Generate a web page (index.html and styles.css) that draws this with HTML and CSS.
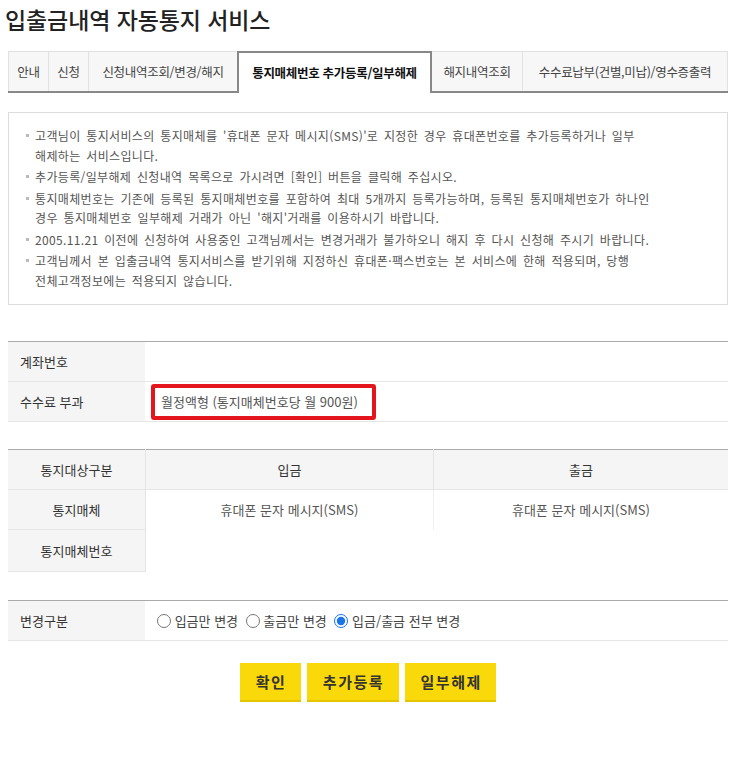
FILE: index.html
```html
<!DOCTYPE html>
<html lang="ko">
<head>
    <meta charset="UTF-8">
    <meta name="viewport" content="width=device-width, initial-scale=1.0">
    <title>입출금내역 자동통지 서비스</title>
    <link rel="stylesheet" href="styles.css">
</head>
<body>
    <div class="page">
        <h1 class="title">입출금내역 자동통지 서비스</h1>

        <ul class="tabs">
            <li class="w40">안내</li>
            <li class="w40">신청</li>
            <li class="w149">신청내역조회/변경/해지</li>
            <li class="w195 on">통지매체번호 추가등록/일부해제</li>
            <li class="w90">해지내역조회</li>
            <li class="last">수수료납부(건별,미납)/영수증출력</li>
        </ul>

        <div class="info">
            <ul>
                <li>고객님이 통지서비스의 통지매체를 '휴대폰 문자 메시지(SMS)'로 지정한 경우 휴대폰번호를 추가등록하거나 일부<br>해제하는 서비스입니다.</li>
                <li>추가등록/일부해제 신청내역 목록으로 가시려면 [확인] 버튼을 클릭해 주십시오.</li>
                <li>통지매체번호는 기존에 등록된 통지매체번호를 포함하여 최대 5개까지 등록가능하며, 등록된 통지매체번호가 하나인<br>경우 통지매체번호 일부해제 거래가 아닌 '해지'거래를 이용하시기 바랍니다.</li>
                <li>2005.11.21 이전에 신청하여 사용중인 고객님께서는 변경거래가 불가하오니 해지 후 다시 신청해 주시기 바랍니다.</li>
                <li>고객님께서 본 입출금내역 통지서비스를 받기위해 지정하신 휴대폰·팩스번호는 본 서비스에 한해 적용되며, 당행<br>전체고객정보에는 적용되지 않습니다.</li>
            </ul>
        </div>

        <table class="form">
            <tr>
                <th>계좌번호</th>
                <td></td>
            </tr>
            <tr>
                <th>수수료 부과</th>
                <td><span class="mark">월정액형 (통지매체번호당 월 900원)</span></td>
            </tr>
        </table>

        <table class="target">
            <tr class="head">
                <th>통지대상구분</th>
                <th class="col-in">입금</th>
                <th>출금</th>
            </tr>
            <tr>
                <th class="side">통지매체</th>
                <td class="col-in">휴대폰 문자 메시지(SMS)</td>
                <td>휴대폰 문자 메시지(SMS)</td>
            </tr>
            <tr class="tall">
                <th class="side">통지매체번호</th>
                <td class="empty"></td>
                <td class="empty"></td>
            </tr>
        </table>

        <table class="form change">
            <tr>
                <th>변경구분</th>
                <td>
                    <label><input type="radio" name="kind"> 입금만 변경</label>
                    <label><input type="radio" name="kind"> 출금만 변경</label>
                    <label><input type="radio" name="kind" checked> 입금/출금 전부 변경</label>
                </td>
            </tr>
        </table>

        <div class="btns">
            <button type="button">확인</button>
            <button type="button">추가등록</button>
            <button type="button">일부해제</button>
        </div>
    </div>
</body>
</html>
```

FILE: styles.css
```css
body {
    margin: 0;
    font-family: "Noto Sans CJK KR", "Noto Sans", sans-serif;
    color: #333;
    background: #fff;
}

.page {
    width: 720px;
    padding: 0 8px;
}

.title {
    margin: 0;
    padding: 3px 0 0 0;
    margin-left: -3px;
    height: 48px;
    font-size: 23px;
    font-weight: 500;
    line-height: 32px;
    color: #222;
    letter-spacing: -0.1px;
}

.tabs {
    display: flex;
    margin: 0;
    padding: 0;
    list-style: none;
    border-bottom: 2px solid #888;
}

.tabs li {
    box-sizing: border-box;
    height: 40px;
    line-height: 40px;
    font-size: 12.5px;
    letter-spacing: -0.3px;
    text-align: center;
    color: #444;
    background: #f7f7f7;
    border-top: 1px solid #e2e2e2;
    border-left: 1px solid #e2e2e2;
    white-space: nowrap;
}

.tabs .w40 { width: 40px; }
.tabs .w149 { width: 149px; }
.tabs .w195 { width: 195px; }
.tabs .w90 { width: 90px; }

.tabs .last {
    flex: 1;
    border-right: 1px solid #e2e2e2;
}

.tabs li.on {
    background: #fff;
    color: #111;
    font-weight: 700;
    border: 2px solid #888;
    border-bottom: none;
    margin-bottom: -2px;
    height: 42px;
    line-height: 40px;
}

.tabs li.on + li {
    border-left: none;
}

.info {
    margin-top: 19px;
    border: 1px solid #dcdcdc;
    padding: 13px 16px 12px 16px;
}

.info ul {
    margin: 0;
    padding: 0;
    list-style: none;
}

.info li {
    position: relative;
    padding-left: 10px;
    margin-bottom: 2px;
    font-size: 12px;
    line-height: 19.5px;
    color: #555;
    letter-spacing: 0.35px;
    word-spacing: 2px;
}

.info li::before {
    content: "";
    position: absolute;
    left: 1px;
    top: 8px;
    width: 3px;
    height: 3px;
    background: #bbb;
}

table {
    width: 100%;
    border-collapse: collapse;
    font-size: 13px;
}

.form {
    margin-top: 36px;
    border-top: 1px solid #aaa;
}

.form th {
    width: 125px;
    height: 39px;
    padding: 0 0 0 12px;
    text-align: left;
    font-weight: 400;
    background: #f5f5f5;
    border-bottom: 1px solid #e5e5e5;
    color: #333;
}

.form td {
    padding: 0 6px;
    border-bottom: 1px solid #e5e5e5;
    color: #555;
}

.mark {
    display: inline-block;
    width: 211px;
    height: 28px;
    line-height: 28px;
    padding: 0 0 0 6px;
    border: 4px solid #e5151e;
    border-radius: 3px;
}

.target {
    margin-top: 27px;
    border-top: 1px solid #aaa;
    table-layout: fixed;
}

.target th,
.target td {
    height: 39px;
    padding: 0;
    text-align: center;
    font-weight: 400;
}

.target .tall th,
.target .tall td {
    height: 41px;
}

.target th:first-child {
    width: 137px;
}

.target .col-in {
    width: 287px;
}

.target .head th {
    background: #f5f5f5;
    border-bottom: 1px solid #e5e5e5;
    color: #333;
}

.target .head .col-in {
    border-left: 1px solid #e5e5e5;
    border-right: 1px solid #e5e5e5;
}

.target .side {
    background: #f5f5f5;
    border-bottom: 1px solid #e5e5e5;
    border-right: 1px solid #e5e5e5;
    color: #333;
}

.target td {
    color: #555;
}

.target td.col-in {
    border-right: 1px solid #f0f0f0;
}

.change {
    margin-top: 28px;
}

.change td {
    padding-left: 12px;
    font-size: 13px;
}

.change label {
    margin-right: 4px;
    color: #444;
}

.change input {
    margin: 0;
    width: 14px;
    height: 14px;
    vertical-align: -2px;
    accent-color: #1a73e8;
}

.btns {
    display: flex;
    justify-content: center;
    gap: 6px;
    margin-top: 22px;
}

.btns button {
    height: 39px;
    padding: 0 14.5px 0 16px;
    font-family: inherit;
    font-size: 15px;
    font-weight: 700;
    letter-spacing: 1.5px;
    color: #333;
    background: #fad90a;
    border: none;
    border-bottom: 2px solid #e4c300;
    cursor: pointer;
}
```
